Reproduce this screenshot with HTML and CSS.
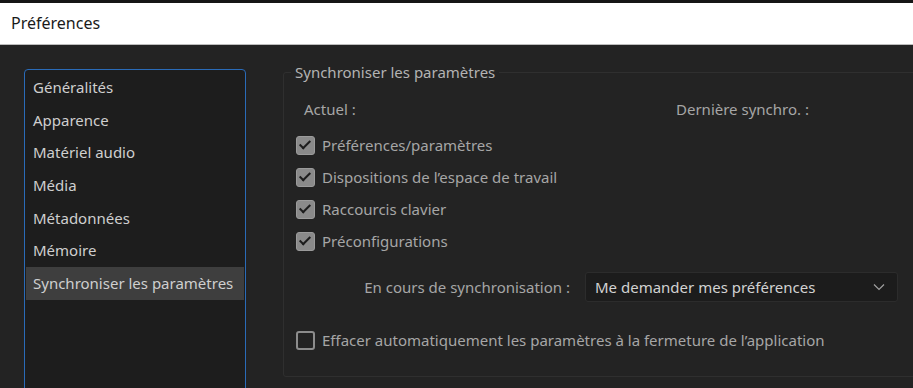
FILE: index.html
```html
<!DOCTYPE html>
<html>

<head>
    <meta charset="utf-8">
    <title>Préférences</title>
    <link rel="stylesheet" href="styles.css">
</head>

<body>
    <div class="strip"></div>
    <div class="titlebar">Préférences</div>
    <div class="main">
        <div class="list">
            <div class="item">Généralités</div>
            <div class="item">Apparence</div>
            <div class="item">Matériel audio</div>
            <div class="item">Média</div>
            <div class="item">Métadonnées</div>
            <div class="item">Mémoire</div>
            <div class="item sel">Synchroniser les paramètres</div>
        </div>
        <fieldset class="group">
            <legend>Synchroniser les paramètres</legend>
            <div class="status">
                <span class="cur">Actuel :</span>
                <span>Dernière synchro. :</span>
            </div>
            <label class="chk"><span class="box on"></span>Préférences/paramètres</label>
            <label class="chk"><span class="box on"></span>Dispositions de l’espace de travail</label>
            <label class="chk"><span class="box on"></span>Raccourcis clavier</label>
            <label class="chk"><span class="box on"></span>Préconfigurations</label>
            <div class="mode">
                <span class="lbl">En cours de synchronisation :</span>
                <div class="select">
                    <span>Me demander mes préférences</span>
                    <svg width="12" height="8" viewBox="0 0 12 8"><path d="M1 1.5 L6 6.5 L11 1.5" fill="none" stroke="#a0a0a0" stroke-width="1.2"/></svg>
                </div>
            </div>
            <label class="chk last"><span class="box"></span>Effacer automatiquement les paramètres à la fermeture de l’application</label>
        </fieldset>
    </div>
</body>

</html>
```

FILE: styles.css
```css
body {
    margin: 0;
    background-color: #232323;
    font-family: "Noto Sans", sans-serif;
    font-size: 15px;
    color: #a6a6a6;
    height: 388px;
    overflow: hidden;
}

.strip {
    height: 3px;
    background-color: #161616;
}

.titlebar {
    height: 41px;
    line-height: 41px;
    background-color: #fff;
    border-bottom: 1px solid #bdbdbd;
    color: #1a1a1a;
    font-size: 16px;
    padding-left: 11px;
}

.main {
    display: flex;
    align-items: flex-start;
    padding: 24px 0 0 24px;
    overflow: hidden;
}

.list {
    width: 218px;
    height: 340px;
    flex: none;
    border: 1px solid #2a6bb8;
    border-radius: 4px;
    background-color: #1d1d1d;
    padding: 1px;
}

.item {
    height: 32.7px;
    line-height: 32.7px;
    padding-left: 7px;
    color: #cfcfcf;
    white-space: nowrap;
}

.item.sel {
    background-color: #3e3e3e;
}

.group {
    flex: none;
    width: 640px;
    margin: -7px 0 0 37px;
    padding: 12px 0 20px 12px;
    border: 1px solid #2f2f2f;
    border-radius: 3px;
}

.group legend {
    margin-left: -5px;
    padding: 0 4px;
    color: #b3b3b3;
}

.status {
    display: flex;
    height: 30px;
    align-items: center;
    padding-left: 8px;
    margin-bottom: 5px;
}

.status .cur {
    width: 372px;
}

.chk {
    display: flex;
    align-items: center;
    height: 32px;
    gap: 7px;
}

.box {
    width: 17px;
    height: 17px;
    border: 1px solid #9b9b9b;
    border-radius: 3px;
    background-color: transparent;
    position: relative;
}

.box.on {
    background-color: #8a8a8a;
}

.box.on::after {
    content: "";
    position: absolute;
    left: 5px;
    top: 1px;
    width: 4px;
    height: 9px;
    border: solid #1c1c1c;
    border-width: 0 2px 2px 0;
    transform: rotate(45deg);
}

.mode {
    display: flex;
    align-items: center;
    height: 30px;
    margin: 15px 0 22px;
}

.mode .lbl {
    width: 274px;
    text-align: right;
    margin-right: 15px;
}

.select {
    width: 290px;
    height: 28px;
    border: 1px solid #2c2c2c;
    border-radius: 3px;
    background-color: #1c1c1c;
    color: #d2d2d2;
    display: flex;
    align-items: center;
    justify-content: space-between;
    padding: 0 12px 0 9px;
}

.chk.last .box {
    border: 2px solid #8c8c8c;
    width: 15px;
    height: 15px;
}
```
